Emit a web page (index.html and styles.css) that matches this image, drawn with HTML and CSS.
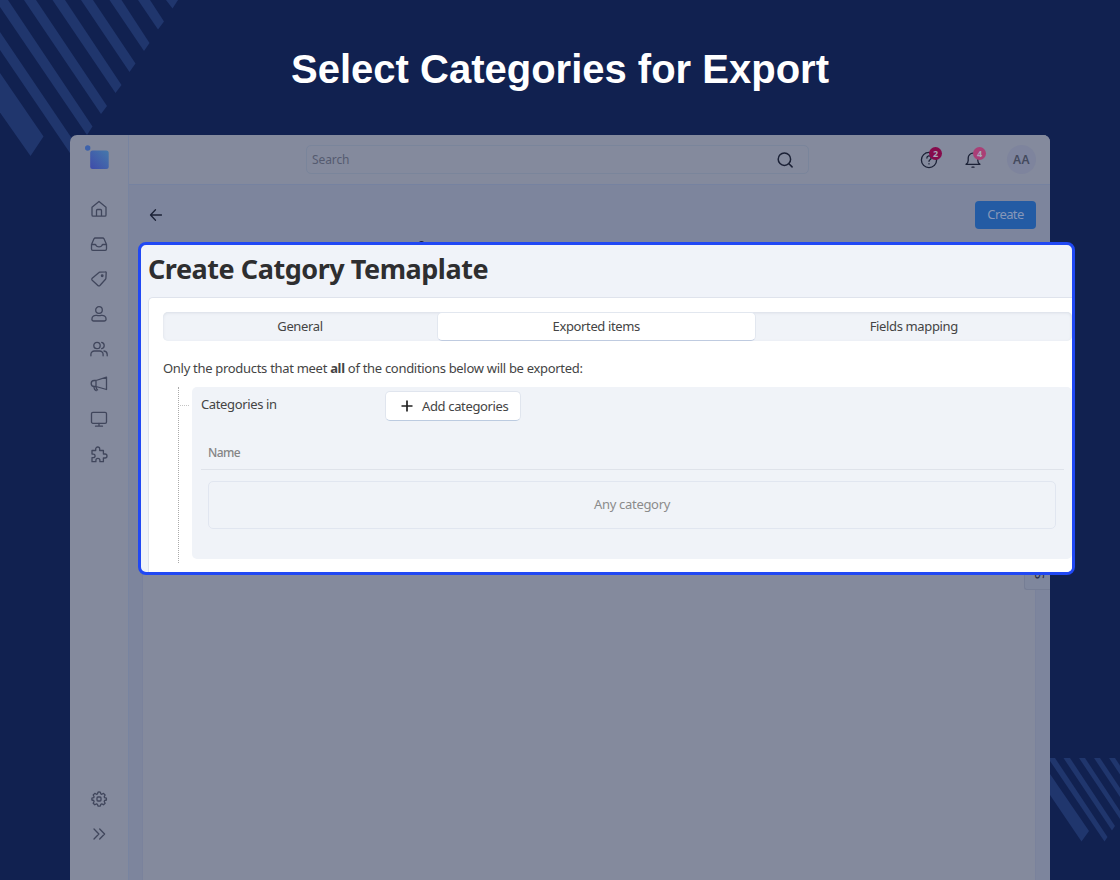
FILE: index.html
```html
<!DOCTYPE html>
<html lang="en">
<head>
    <meta charset="UTF-8">
    <meta name="viewport" content="width=device-width, initial-scale=1.0">
    <title>Select Categories for Export</title>
    <link rel="stylesheet" href="styles.css">
</head>
<body>
    <svg class="stripes" viewBox="0 0 1120 880">
        <!-- top left -->
        <path d="M0 73L43.5 136.5L30.5 156L0 112.500z"/>
        <path d="M0 32L78 147.500L72 156L0 50z"/>
        <path d="M0 0H8L92.500 126.500L87 135L0 7z"/>
        <path d="M24 0H36L107 106L101 114z"/>
        <path d="M52.500 0H65L121.500 85L115.500 93z"/>
        <path d="M81 0H93L135.500 63.500L129.500 72z"/>
        <path d="M109.500 0H121.500L149.500 43L144 51z"/>
        <path d="M138 0H150L164 21.500L158 29.500z"/>
        <path d="M166 0H178L172.500 8.500z"/>
        <!-- bottom right -->
        <path d="M1050 774L1089 831L1081.500 841.500L1050 795z"/>
        <path d="M1050 758H1055L1107.500 837L1104.500 841.500L1050 761z"/>
        <path d="M1063.500 758H1070L1115 826L1112 830.500z"/>
        <path d="M1079 758H1085L1120 811V819z"/>
        <path d="M1094 758H1100L1120 788V797z"/>
        <path d="M1109 758H1115L1120 765.500V774.500z"/>
    </svg>

    <h1 class="headline">Select Categories for Export</h1>

    <div class="window">
        <nav class="sidebar">
            <svg class="logo" viewBox="0 0 26 26">
                <defs>
                    <linearGradient id="logoFill" x1="0" y1="1" x2="1" y2="0">
                        <stop offset="0" stop-color="#3f4baa"/>
                        <stop offset="1" stop-color="#4579ab"/>
                    </linearGradient>
                </defs>
                <circle cx="2.700" cy="4" r="2.700" fill="#3d62ac"/>
                <rect x="5.200" y="6.500" width="18.500" height="18.500" rx="2.500" fill="url(#logoFill)"/>
            </svg>
            <svg class="icon" viewBox="0 0 18 18"><path d="M2 7.200L9 1.500L16 7.200V15a1.200 1.200 0 0 1-1.200 1.200H3.200A1.200 1.200 0 0 1 2 15zM6.500 16V10.500a1 1 0 0 1 1-1h3a1 1 0 0 1 1 1V16"/></svg>
            <svg class="icon" viewBox="0 0 18 18"><path d="M1.500 9.500L4 3.800A1.500 1.500 0 0 1 5.400 3h7.200A1.500 1.500 0 0 1 14 3.800L16.500 9.500V14a1.300 1.300 0 0 1-1.300 1.300H2.800A1.300 1.300 0 0 1 1.500 14zM1.500 9.500H5c.6 0 .9.400 1.100.900.400 1 1.500 1.400 2.900 1.400s2.500-.4 2.900-1.400c.2-.5.500-.9 1.100-.9h3.500"/></svg>
            <svg class="icon" viewBox="0 0 18 18"><path d="M9.800 2.200L15.200 1.800a.9.900 0 0 1 1 1L15.900 8.200a1.500 1.500 0 0 1-.4 1L9.900 15.500a1.400 1.400 0 0 1-2 0L2.200 10.200a1.400 1.400 0 0 1 0-2L8.700 2.700a1.800 1.800 0 0 1 1.100-.5z"/><circle cx="12.200" cy="5.800" r=".8"/></svg>
            <svg class="icon" viewBox="0 0 18 18"><circle cx="9" cy="5" r="3.300"/><path d="M1.900 14.300c0-3 2.500-4.300 4.900-3.900 1.500.4 2.900.4 4.400 0 2.400-.4 4.900.900 4.900 3.900 0 1-.7 1.700-1.700 1.700H3.600c-1 0-1.700-.7-1.700-1.700z"/></svg>
            <svg class="icon" viewBox="0 0 18 18"><circle cx="7" cy="5.500" r="3.200"/><path d="M.9 15.800v-1.300a3.500 3.500 0 0 1 3.500-3.500h5.200a3.500 3.500 0 0 1 3.500 3.500v1.300M11.700 2.300a3.300 3.300 0 0 1 0 6.400M14 11a3.600 3.600 0 0 1 3.200 3.500v1.300"/></svg>
            <svg class="icon" viewBox="0 0 18 18"><path d="M6 5.500L16.500 2.200V14.500L6 11.500zM6 5.500H4.200a2.900 2.900 0 0 0 0 6H6M3.700 11.700c.3 2 .8 3.400 2.500 4M6 11.500c0 1.500.4 2.500 1.600 3.400"/></svg>
            <svg class="icon" viewBox="0 0 18 18"><rect x="1.500" y="2.300" width="15" height="11" rx="1.400"/><path d="M9 13.300v2.900M5.500 16.200h7"/></svg>
            <svg class="icon" viewBox="0 0 18 18"><path d="M2 5.500h3.700V4a2 2 0 1 1 4 0v1.500h3.700V9H15a2 2 0 1 1 0 4h-1.600v3.700H9.900v-1.400a2 2 0 0 0-4 0v1.400H2v-4h1.300a1.800 1.800 0 0 0 0-3.600H2z"/></svg>
            <svg class="icon push" viewBox="0 0 18 18"><path d="M9 2l1.300.1.500 1.800 1 .4 1.700-.9 1.600 1.600-.9 1.700.4 1 1.800.5V10l-1.800.5-.4 1 .9 1.700-1.600 1.600-1.700-.9-1 .4-.5 1.800H8l-.5-1.800-1-.4-1.700.9-1.600-1.600.9-1.700-.4-1L1.900 10V8.200l1.800-.5.400-1-.9-1.700 1.600-1.600 1.700.9 1-.4.5-1.800z"/><rect x="7" y="7" width="4" height="4" rx="1"/></svg>
            <svg class="icon" viewBox="0 0 18 18"><path d="M4 4l4.900 5L4 14M9.700 4l4.900 5-4.900 5"/></svg>
        </nav>

        <div class="main">
            <header class="topbar">
                <div class="search">
                    <span>Search</span>
                    <svg class="icon dark" viewBox="0 0 18 18"><circle cx="8.400" cy="8.200" r="6.200"/><path d="M12.900 12.700l3.200 3.200"/></svg>
                </div>
                <div class="tools">
                    <div class="tool">
                        <svg class="icon dark" viewBox="0 0 18 18"><circle cx="9" cy="9" r="7.600"/><path d="M6.900 7a2.100 2.100 0 1 1 3.100 1.800c-.7.400-1 .7-1 1.500M9 12.700v.2"/></svg>
                        <span class="badge">2</span>
                    </div>
                    <div class="tool">
                        <svg class="icon dark" viewBox="0 0 18 18"><path d="M2 13.300c1.500-.8 2.200-2 2.200-3.800V7a4.800 4.800 0 0 1 9.600 0v2.500c0 1.800.7 3 2.200 3.800zM8 16.200h2"/></svg>
                        <span class="badge pink">4</span>
                    </div>
                    <div class="avatar">AA</div>
                </div>
            </header>
            <div class="actions">
                <svg class="icon dark" viewBox="0 0 18 18"><path d="M14.500 9H3.500M8.500 3.800L3.500 9l5 5.200"/></svg>
                <div class="create">Create</div>
            </div>
            <div class="page"></div>
            <div class="letter-tip"></div>
            <div class="side-tab"><span>TS</span></div>
        </div>
    </div>

    <section class="spotlight">
        <h2 class="title">Create Catgory Temaplate</h2>
        <div class="card">
            <div class="tabs">
                <div class="tab first"><span>General</span></div>
                <div class="tab active"><span>Exported items</span></div>
                <div class="tab"><span>Fields mapping</span></div>
            </div>
            <p class="hint">Only the products that meet <b>all</b> of the conditions below will be exported:</p>
            <div class="tree">
                <div class="branch"></div>
                <div class="group">
                    <div class="condition">
                        <span class="label">Categories in</span>
                        <div class="add">
                            <svg class="plus" viewBox="0 0 12 12"><path d="M6 .5v11M.5 6h11"/></svg>
                            <span>Add categories</span>
                        </div>
                    </div>
                    <div class="column">Name</div>
                    <div class="empty"><span>Any category</span></div>
                </div>
            </div>
        </div>
    </section>
</body>
</html>
```
FILE: styles.css
```css
* {
    box-sizing: border-box;
}
body {
    margin: 0;
    height: 880px;
    overflow: hidden;
    position: relative;
    background: #112150;
    color: #444;
    font-family: "Noto Sans", sans-serif;
    font-size: 13px;
    letter-spacing: -0.3px;
}
.stripes {
    position: absolute;
    top: 0;
    left: 0;
    width: 1120px;
    height: 880px;
    fill: #20366d;
}
.headline {
    margin: 0;
    height: 135px;
    padding-top: 45px;
    position: relative;
    text-align: center;
    color: #fff;
    font: bold 40px/48px "Liberation Sans", Arial, sans-serif;
    letter-spacing: 0;
}

/* dimmed app window */
.window {
    position: relative;
    display: flex;
    width: 980px;
    height: 745px;
    margin: 0 auto;
    border-radius: 7px 7px 0 0;
    overflow: hidden;
    background: #848a9d;
}
.sidebar {
    display: flex;
    flex-direction: column;
    align-items: center;
    gap: 17px;
    width: 59px;
    padding: 9px 0 37px;
    border-right: 1px solid #7884a0;
}
.logo {
    width: 26px;
    height: 26px;
    margin: 0 3px 12.5px 0;
}
.icon {
    width: 18px;
    height: 18px;
    flex: none;
    fill: none;
    stroke: #40465c;
    stroke-width: 1.3;
    stroke-linecap: round;
    stroke-linejoin: round;
}
.icon.push {
    margin-top: auto;
}
.icon.dark {
    stroke: #1b2136;
}
.main {
    position: relative;
    flex: 1;
    display: flex;
    flex-direction: column;
    background: #7d859d;
}
.topbar {
    display: flex;
    align-items: center;
    justify-content: space-between;
    height: 50px;
    padding: 0 14px 0 177px;
    border-bottom: 1px solid #7682a0;
    background: #848a9d;
}
.search {
    display: flex;
    align-items: center;
    justify-content: space-between;
    width: 503px;
    height: 29px;
    padding: 0 14px 0 5px;
    border: 1px solid #7a859b;
    border-radius: 5px;
    color: #555b70;
    font-size: 12px;
    letter-spacing: -0.1px;
}
.search .icon {
    stroke-width: 1.5;
}
.tools {
    display: flex;
    align-items: center;
    gap: 26px;
}
.tool {
    position: relative;
    height: 18px;
}
.badge {
    position: absolute;
    top: -4px;
    right: -4px;
    width: 13px;
    height: 13px;
    border-radius: 50%;
    background: #860b4c;
    color: #a9a9ba;
    font-size: 9px;
    font-weight: bold;
    line-height: 13px;
    text-align: center;
    letter-spacing: 0;
}
.badge.pink {
    background: #aa3f76;
}
.avatar {
    width: 29px;
    height: 29px;
    margin-left: -1px;
    border-radius: 50%;
    background: #7e849d;
    color: #444a5d;
    font-size: 12px;
    font-weight: 600;
    line-height: 29px;
    text-align: center;
    letter-spacing: 0.4px;
}
.actions {
    display: flex;
    align-items: center;
    justify-content: space-between;
    height: 60px;
    padding: 0 14px 0 18px;
}
.create {
    width: 61px;
    height: 28px;
    border-radius: 4px;
    background: #235ba4;
    color: #8797b8;
    line-height: 27px;
    text-align: center;
    letter-spacing: -0.6px;
}
.page {
    flex: 1;
    margin: 51px 14px 0 13px;
    border: 1px solid #7a829c;
    border-bottom: 0;
    background: #848a9d;
}
/* top of a heading letter that shows above the highlighted area */
.letter-tip {
    position: absolute;
    top: 106px;
    left: 290px;
    width: 5px;
    height: 2px;
    border-radius: 2px 2px 0 0;
    background: #20263f;
}
.side-tab {
    position: absolute;
    top: 400px;
    right: 0;
    width: 26px;
    height: 55px;
    padding: 0 1px 10px 0;
    border: 1px solid #767e95;
    border-right: 0;
    border-radius: 3px 0 0 3px;
    background: #7f879d;
    color: #252b40;
    writing-mode: vertical-rl;
    text-align: right;
}

/* highlighted area */
.spotlight {
    position: absolute;
    top: 242px;
    left: 138px;
    width: 937px;
    height: 333px;
    padding-left: 7px;
    border: 3px solid #2048f4;
    border-radius: 8px;
    overflow: hidden;
    background: #f0f3f9;
}
.title {
    margin: 0;
    height: 52px;
    color: #2e2e30;
    font-size: 27px;
    font-weight: 700;
    line-height: 48px;
    letter-spacing: -0.46px;
    white-space: nowrap;
}
.card {
    height: 290px;
    padding: 14px 0 0 14px;
    border: 1px solid #dfe3ec;
    border-right: 0;
    border-radius: 5px 0 0 0;
    background: #fff;
}
.tabs {
    display: flex;
    height: 29px;
    border-radius: 5px;
    background: #f0f3f8;
    box-shadow: inset 0 1px 3px #d9dee6;
}
.tab {
    flex: 1;
    line-height: 28px;
    text-align: center;
    letter-spacing: -0.36px;
}
.tab.first {
    flex: none;
    width: 274px;
}
.tab.active {
    border: 1px solid #e2e7ef;
    border-bottom-color: #bfcbe0;
    border-radius: 5px;
    background: #fff;
    line-height: 26px;
}
.hint {
    margin: 18px 0 10px;
    line-height: 18px;
}
.tree {
    display: flex;
    padding-left: 15px;
}
.branch {
    width: 14px;
    height: 176px;
    border-left: 1px dotted #aaa;
}
.branch::before {
    content: "";
    display: block;
    width: 9px;
    margin: 18px 0 0 1px;
    border-top: 1px dotted #c4c4c4;
}
.group {
    flex: 1;
    height: 172px;
    padding: 4px 8px 0 9px;
    border-radius: 5px;
    background: #f0f3f8;
}
.condition {
    display: flex;
    height: 46px;
}
.label {
    width: 184px;
    line-height: 27px;
    letter-spacing: -0.36px;
}
.add {
    display: flex;
    align-items: center;
    gap: 9px;
    width: 136px;
    height: 30px;
    padding-left: 15px;
    border: 1px solid #e0e5ee;
    border-bottom-color: #bccbe0;
    border-radius: 5px;
    background: #fff;
    letter-spacing: -0.35px;
}
.plus {
    width: 12px;
    height: 12px;
    stroke: #222;
    stroke-width: 1.7;
}
.column {
    height: 33px;
    padding-left: 7px;
    border-bottom: 1px solid #dfe3ea;
    color: #858585;
    font-size: 12px;
    font-weight: 500;
    line-height: 32px;
    letter-spacing: -0.6px;
}
.empty {
    height: 48px;
    margin: 11px 8px 0 7px;
    border: 1px solid #e1e6f0;
    border-radius: 5px;
    color: #8b8b8b;
    line-height: 45px;
    text-align: center;
}
```
